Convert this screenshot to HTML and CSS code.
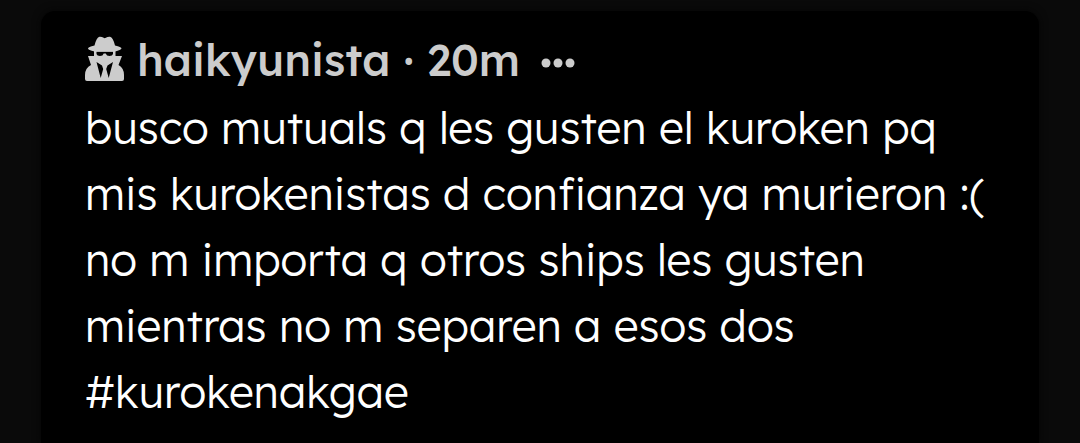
FILE: index.html
```html
<!DOCTYPE html>
<html lang="es">
<head>
<meta charset="utf-8">
<meta name="viewport" content="width=device-width, initial-scale=1">
<title>haikyunista</title>
<link rel="stylesheet" href="styles.css">
</head>
<body>
<article class="post">
  <header class="post-header">
    <svg class="avatar" viewBox="0 0 39 46" aria-hidden="true">
      <g fill="currentColor">
        <path d="M9.500 9.500Q11.500 1.500 14.500.800Q16 .500 19.700 2.200Q23.500 .500 25 .800Q28 1.500 30 9.500Q36.500 11 36.500 12.500Q36 14 30 15.500H9.500Q3 14 3 12.500Q3 11 9.500 9.500Z"/>
        <path fill-rule="evenodd" d="M9 14H30.500V20H37L33.500 29Q39 32 39 39V43Q39 45 37 45H2Q0 45 0 43V39Q0 32 6 29L3 20H9ZM11.500 15.800V18Q12 20 15 20Q18 20 18.700 17.500H20.700Q21.500 20 24.500 20Q27.500 20 28 18V15.800ZM11.500 26L15.700 42L18.200 33L17 29.500ZM28 26L23.700 42L21.200 33L22.500 29.500Z"/>
      </g>
    </svg>
    <span class="author">haikyunista</span>
    <span class="dot">·</span>
    <time class="age">20m</time>
    <button class="more" type="button" aria-label="Más opciones">
      <svg class="more-icon" viewBox="0 0 34 10" aria-hidden="true"><g fill="currentColor"><circle cx="5" cy="5" r="4.5"/><circle cx="17" cy="5" r="4.5"/><circle cx="29" cy="5" r="4.5"/></g></svg>
    </button>
  </header>
  <p class="post-text">busco mutuals q les gusten el kuroken pq mis kurokenistas d confianza ya murieron :( no m importa q otros ships les gusten mientras no m separen a esos dos #kurokenakgae</p>
</article>
</body>
</html>
```
FILE: styles.css
```css
* { box-sizing: border-box; }
html { min-height: 100%; display: flex; background: #0a0a0a; }
body { flex: 1; display: flex; margin: 0; padding: 11px 41px 0; font-family: Lexend, Lato, sans-serif; }
.post { flex: 1; min-width: 0; padding: 16px 44px 0; border-radius: 14px 14px 0 0; background: #000; color: #fff; box-shadow: 0 0 8px #050505; }
.post-header { display: flex; align-items: center; height: 64px; gap: 13px; color: #ccc; font-size: 44px; font-weight: 500; }
.avatar { width: 39px; height: 46px; }
.more { display: flex; margin-left: 8px; padding: 8px 0 0; border: 0; background: none; color: inherit; }
.more-icon { width: 34px; height: 10px; }
.post-text { margin: 4px 0 0; font-size: 44px; font-weight: 300; line-height: 66px; }
```
